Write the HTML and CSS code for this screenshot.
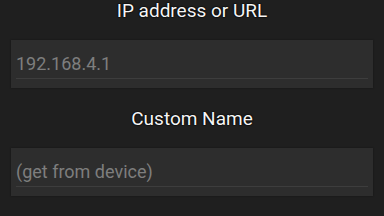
FILE: index.html
```html
<!DOCTYPE html>
<html lang="en">
<head>
  <meta charset="UTF-8">
  <title>Add Device</title>
  <link rel="stylesheet" href="styles.css">
</head>
<body>
  <div class="form">
    <div class="section">
      <label class="label" for="address">IP address or URL</label>
      <div class="field">
        <input class="input" id="address" type="text" placeholder="192.168.4.1">
      </div>
    </div>
    <div class="section">
      <label class="label" for="name">Custom Name</label>
      <div class="field">
        <input class="input" id="name" type="text" placeholder="(get from device)">
      </div>
    </div>
  </div>
</body>
</html>
```

FILE: styles.css
```css
* { margin: 0; padding: 0; box-sizing: border-box; }
html, body {
  width: 384px;
  height: 216px;
  overflow: hidden;
}
body {
  background: #1f1f1f;
  font-family: Roboto, "Noto Sans", sans-serif;
}
.form {
  display: flex;
  flex-direction: column;
}
.section {
  display: flex;
  flex-direction: column;
  height: 108px;
}
.label {
  display: block;
  height: 22px;
  line-height: 22px;
  margin-bottom: 18px;
  text-align: center;
  color: #f6f6f6;
  font-size: 19px;
  text-shadow: 0 0 2px #000, 0 0 1px #000, 0 0 1px #000;
}
.field {
  margin: 0 11px;
  height: 48px;
  padding: 0 5px;
  background: #2d2d2d;
  box-shadow: 0 0 2px rgba(0,0,0,0.4);
}
.input {
  display: block;
  width: 100%;
  height: 39px;
  padding: 9px 0 0 0;
  background: transparent;
  border: none;
  border-bottom: 1px solid #3d3d3d;
  outline: none;
  color: #bdbdbd;
  font-family: Roboto, "Noto Sans", sans-serif;
  font-size: 18px;
}
.input::placeholder {
  color: #7e7e7e;
}
```
